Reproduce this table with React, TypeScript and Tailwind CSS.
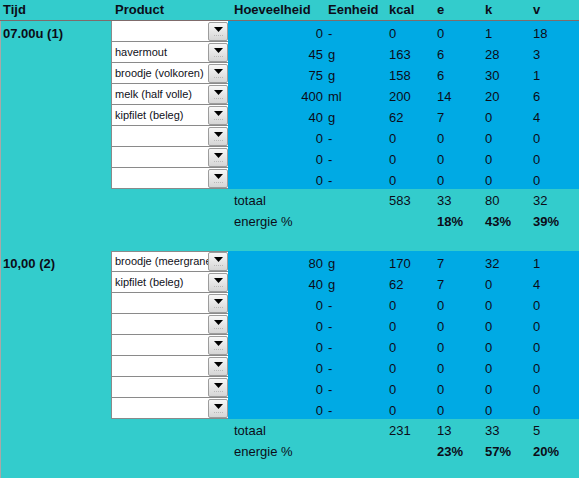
type Row = { p: string; q: string; u: string; kcal: string; e: string; k: string; v: string };

const empty: Row = { p: '', q: '0', u: '-', kcal: '0', e: '0', k: '0', v: '0' };

const meals = [
  {
    tijd: '07.00u (1)',
    rows: [
      { p: '', q: '0', u: '-', kcal: '0', e: '0', k: '1', v: '18' },
      { p: 'havermout', q: '45', u: 'g', kcal: '163', e: '6', k: '28', v: '3' },
      { p: 'broodje (volkoren)', q: '75', u: 'g', kcal: '158', e: '6', k: '30', v: '1' },
      { p: 'melk (half volle)', q: '400', u: 'ml', kcal: '200', e: '14', k: '20', v: '6' },
      { p: 'kipfilet (beleg)', q: '40', u: 'g', kcal: '62', e: '7', k: '0', v: '4' },
      empty,
      empty,
      empty,
    ] as Row[],
    totaal: ['583', '33', '80', '32'],
    pct: ['18%', '43%', '39%'],
  },
  {
    tijd: '10,00 (2)',
    rows: [
      { p: 'broodje (meergranen)', q: '80', u: 'g', kcal: '170', e: '7', k: '32', v: '1' },
      { p: 'kipfilet (beleg)', q: '40', u: 'g', kcal: '62', e: '7', k: '0', v: '4' },
      empty,
      empty,
      empty,
      empty,
      empty,
      empty,
    ] as Row[],
    totaal: ['231', '13', '33', '5'],
    pct: ['23%', '57%', '20%'],
  },
];

function Combo({ text, top }: { text: string; top: boolean }) {
  return (
    <div
      className={`flex h-[21px] w-[117px] items-center border-b border-l border-[#8a8a8a] bg-white ${top ? 'border-t' : ''}`}
    >
      <div className="flex-1 overflow-hidden whitespace-nowrap pl-[3px] text-[11px] leading-[19px] text-[#101020]">{text}</div>
      <div className="flex h-[19px] w-[20px] shrink-0 flex-col items-center justify-center rounded-[2px] border border-[#9c9c9c] bg-gradient-to-b from-[#f7f7f7] to-[#d6d6d6]">
        <svg width="9" height="5" viewBox="0 0 9 5">
          <path d="M0 0H9L4.5 5Z" fill="#000" />
        </svg>
        <div className="mt-[3px] w-[9px] border-t border-dotted border-[#b8b8b8]" />
      </div>
    </div>
  );
}

export default function App() {
  return (
    <div className="flex h-[478px] w-[579px] flex-col overflow-hidden bg-[#33cccc] font-['Liberation_Sans',Arial,sans-serif] text-[13px] text-[#0c0c18]">
      {/* kopregel */}
      <div className="flex h-[21px] shrink-0 border-b border-[#7f6b6b] font-bold leading-[20px]">
        <div className="w-[111px] pl-[3px]">Tijd</div>
        <div className="w-[117px] pl-[4px]">Product</div>
        <div className="w-[97px] pl-[6px]">Hoeveelheid</div>
        <div className="w-[61px] pl-[3px]">Eenheid</div>
        <div className="w-[48px] pl-[3px]">kcal</div>
        <div className="w-[48px] pl-[3px]">e</div>
        <div className="w-[48px] pl-[3px]">k</div>
        <div className="flex-1 pl-[3px]">v</div>
      </div>

      <div className="flex-1 border-l border-[#a8a8a8]">
        {meals.map((m, mi) => (
          <div key={mi} className={mi > 0 ? 'pt-[20px]' : ''}>
            {m.rows.map((r, i) => (
              <div key={i} className="flex h-[21px]">
                <div className="w-[110px] overflow-hidden whitespace-nowrap pl-[2px] pt-[3px] font-bold leading-[20px]">
                  {i === 0 ? m.tijd : ''}
                </div>
                <Combo text={r.p} top={mi > 0 && i === 0} />
                <div className="flex flex-1 bg-[#00aae4] pt-[3px] leading-[20px]">
                  <div className="w-[97px] pr-[2px] text-right">{r.q}</div>
                  <div className="w-[61px] pl-[3px]">{r.u}</div>
                  <div className="w-[48px] pl-[3px]">{r.kcal}</div>
                  <div className="w-[48px] pl-[3px]">{r.e}</div>
                  <div className="w-[48px] pl-[3px]">{r.k}</div>
                  <div className="flex-1 pl-[3px]">{r.v}</div>
                </div>
              </div>
            ))}
            <div className="flex h-[21px] pt-[2px] leading-[20px]">
              <div className="w-[227px]" />
              <div className="w-[97px] pl-[6px]">totaal</div>
              <div className="w-[61px]" />
              <div className="w-[48px] pl-[3px]">{m.totaal[0]}</div>
              <div className="w-[48px] pl-[3px]">{m.totaal[1]}</div>
              <div className="w-[48px] pl-[3px]">{m.totaal[2]}</div>
              <div className="flex-1 pl-[3px]">{m.totaal[3]}</div>
            </div>
            <div className="flex h-[21px] pt-[2px] leading-[20px]">
              <div className="w-[227px]" />
              <div className="w-[97px] whitespace-nowrap pl-[6px]">energie %</div>
              <div className="w-[61px]" />
              <div className="w-[48px]" />
              <div className="w-[48px] pl-[3px] font-bold">{m.pct[0]}</div>
              <div className="w-[48px] pl-[3px] font-bold">{m.pct[1]}</div>
              <div className="flex-1 pl-[3px] font-bold">{m.pct[2]}</div>
            </div>
          </div>
        ))}
      </div>
    </div>
  );
}
